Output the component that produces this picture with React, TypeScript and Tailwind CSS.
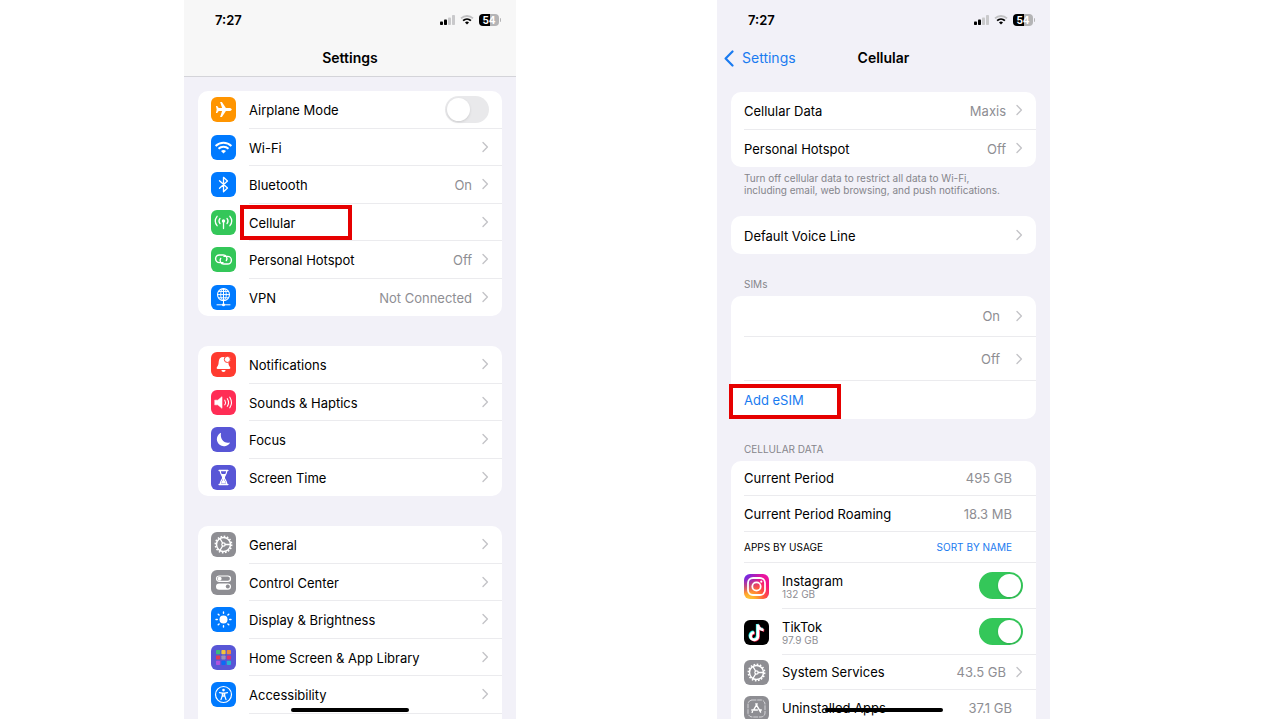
import { useId, useState } from "react";
import type { ReactNode } from "react";

function SignalIcon() {
  return (
    <svg viewBox="0 0 15 10" className="w-[15px] h-2.5" aria-hidden="true">
      <rect x="0" y="6.5" width="3" height="3.5" rx="0.8" fill="#000" />
      <rect x="4" y="4.5" width="3" height="5.5" rx="0.8" fill="#000" />
      <rect x="8" y="2.5" width="3" height="7.5" rx="0.8" fill="#c9c9cb" />
      <rect x="12" y="0" width="3" height="10" rx="0.8" fill="#c9c9cb" />
    </svg>
  );
}

function StatusWifiIcon() {
  return (
    <svg viewBox="0 0 14 10" className="w-3.5 h-2.5" fill="none" aria-hidden="true">
      <path d="M1 3.4C4.4.2 9.6.2 13 3.4" stroke="#c0c0c2" strokeWidth="1.8" />
      <path d="M3.1 5.6c2.2-2 5.6-2 7.8 0" stroke="#000" strokeWidth="1.8" />
      <path d="M5 7.4a3 3 0 0 1 4 0L7 9.6z" fill="#000" />
    </svg>
  );
}

function StatusBar() {
  return (
    <div className="flex items-center justify-between h-10 pl-[31px] pr-[15px]">
      <span className="text-[13px] font-semibold">7:27</span>
      <div className="flex items-center gap-[5px]">
        <SignalIcon />
        <StatusWifiIcon />
        <div className="flex items-center gap-px">
          <span className="w-5 h-3 rounded bg-linear-to-r from-black from-54% to-[#b4b4b6] to-54% text-white text-[10px] leading-3 font-bold text-center">
            54
          </span>
          <span className="w-px h-1 rounded-r bg-[#b4b4b6]" />
        </div>
      </div>
    </div>
  );
}

function Chevron() {
  return (
    <svg viewBox="0 0 7 12" className="w-[7px] h-3 shrink-0" fill="none" aria-hidden="true">
      <path d="M1 1.6 5.4 6 1 10.4" stroke="#c4c4c8" strokeWidth="1.4" strokeLinecap="round" strokeLinejoin="round" />
    </svg>
  );
}

function Tile({ className, children }: { className: string; children: ReactNode }) {
  return (
    <span className={`block size-[25px] shrink-0 rounded-md overflow-hidden ${className}`}>
      <svg viewBox="0 0 25 25" className="size-full" fill="none" stroke="#fff" strokeLinecap="round" strokeLinejoin="round" aria-hidden="true">
        {children}
      </svg>
    </span>
  );
}

function GearTile() {
  return (
    <Tile className="bg-[#8e8e93]">
      <circle cx="12.5" cy="12.5" r="7" strokeWidth="1.5" />
      <circle cx="12.5" cy="12.5" r="8.2" strokeWidth="1.5" strokeLinecap="butt" strokeDasharray="1.6 1.62" />
      <circle cx="12.5" cy="12.5" r="1.7" strokeWidth="1.2" />
      <path d="M14.2 12.5h5M11.6 11 9 6.6M11.6 14 9 18.4" strokeWidth="1.3" />
    </Tile>
  );
}

const icons = {
  airplane: (
    <Tile className="bg-[#ff9500]">
      <path
        d="M20.8 12.5c0-.9-1.3-1.5-2.600-1.500h-3.300L10.900 5H9.100l2 6H7.700L6.200 9H4.900l.8 3.500-.8 3.500h1.300l1.500-2h3.400l-2 6h1.800l4-6h3.300c1.300 0 2.600-.600 2.600-1.500z"
        fill="#fff"
        stroke="none"
      />
    </Tile>
  ),
  wifi: (
    <Tile className="bg-[#007aff]">
      <path d="M4.600 11c4.400-4.300 11.400-4.300 15.800 0M7.500 13.700c2.800-2.700 7.200-2.700 10 0" strokeWidth="2" strokeLinecap="butt" />
      <path d="M10 16c1.400-1.300 3.600-1.300 5 0l-2.500 2.600z" fill="#fff" stroke="none" />
    </Tile>
  ),
  bluetooth: (
    <Tile className="bg-[#007aff]">
      <path d="m8.500 8.800 8 7.200-4 3.700V5.300l4 3.700-8 7.200" strokeWidth="1.300" />
    </Tile>
  ),
  cellular: (
    <Tile className="bg-[#34c759]">
      <circle cx="12.5" cy="11" r="1.700" fill="#fff" stroke="none" />
      <path d="M12.5 11v7.600M9 8.400a4.200 4.200 0 0 0 0 5.200M16 8.400a4.200 4.200 0 0 1 0 5.200M6.100 6.300a7.600 7.600 0 0 0 0 9.400M18.900 6.300a7.600 7.600 0 0 1 0 9.400" strokeWidth="1.300" />
    </Tile>
  ),
  hotspot: (
    <Tile className="bg-[#34c759]">
      <path d="M12 15.600H8.400a3.800 3.800 0 0 1 0-7.600h3.900c3 0 4.600 3 3 5.600M13 9.400h3.600a3.800 3.800 0 0 1 0 7.600h-3.900c-3 0-4.600-3-3-5.600" strokeWidth="1.400" />
    </Tile>
  ),
  vpn: (
    <Tile className="bg-[#007aff]">
      <circle cx="12.5" cy="9.6" r="6" strokeWidth="1.100" />
      <ellipse cx="12.5" cy="9.6" rx="2.8" ry="6" strokeWidth="0.9" />
      <path d="M12.5 3.6v15M6.5 9.6h12M7.6 6.4h9.8M7.6 12.8h9.8M6 19.8h13" strokeWidth="1" />
      <circle cx="12.5" cy="19.8" r="1.5" fill="#fff" stroke="none" />
    </Tile>
  ),
  bell: (
    <Tile className="bg-[#ff3b30]">
      <path
        d="M12.200 5c-2.900 0-4.300 2-4.500 4.800-.2 3-.6 3.900-1.700 5.200-.7.900-.4 1.900.7 1.900h11.600c1.100 0 1.400-1 .7-1.900-1.100-1.300-1.500-2.200-1.700-5.200C17.100 7 15 5 12.200 5zM10.400 18h4.200a2.100 2.100 0 0 1-4.200 0z"
        fill="#fff"
        stroke="none"
      />
      <circle cx="16.400" cy="7.400" r="3.100" fill="#fff" stroke="#ff3b30" strokeWidth="1" />
    </Tile>
  ),
  sound: (
    <Tile className="bg-[#ff2d55]">
      <path d="M4 10.200h2.800l4.200-3.500v11.600l-4.200-3.500H4z" fill="#fff" strokeWidth="0.600" />
      <path d="M13.800 10.200a4.400 4.400 0 0 1 0 4.600M16.300 8.700a7 7 0 0 1 0 7.600M18.800 7.200a10 10 0 0 1 0 10.600" strokeWidth="1.100" />
    </Tile>
  ),
  moon: (
    <Tile className="bg-[#5856d6]">
      <path d="M10.100 5.800a7 7 0 1 0 9 9.600c-5.500 2-10.600-3.200-9-9.600z" fill="#fff" stroke="none" />
    </Tile>
  ),
  hourglass: (
    <Tile className="bg-[#5856d6]">
      <path d="M8.200 5.500h8.600M8.200 19.500h8.600" strokeWidth="1.600" />
      <path d="M9.200 5.500c0 4 2.500 4.800 2.500 7s-2.500 3-2.500 7M15.800 5.500c0 4-2.500 4.800-2.500 7s2.500 3 2.500 7" strokeWidth="1.200" />
      <path d="M10 9h5l-2 3v2.500l2.200 4H9.800l2.200-4V12z" fill="#fff" stroke="none" />
    </Tile>
  ),
  gear: <GearTile />,
  controls: (
    <Tile className="bg-[#8e8e93]">
      <rect x="5.500" y="6" width="14" height="5.400" rx="2.700" strokeWidth="1.200" />
      <circle cx="8.600" cy="8.700" r="2" fill="#fff" stroke="none" />
      <rect x="5" y="13.400" width="15" height="6.400" rx="3.200" fill="#fff" stroke="none" />
      <circle cx="16.800" cy="16.600" r="2" fill="#8e8e93" stroke="none" />
    </Tile>
  ),
  brightness: (
    <Tile className="bg-[#007aff]">
      <circle cx="12.500" cy="12.500" r="4" fill="#fff" stroke="none" />
      <path d="M12.500 5v1.300M12.500 18.700V20M5 12.500h1.300M18.700 12.500H20M7.200 7.200l.9.900M16.900 16.900l.9.900M17.800 7.200l-.9.900M8.100 16.900l-.9.900" strokeWidth="1.400" />
    </Tile>
  ),
  homeScreen: (
    <Tile className="bg-[#5856d6]">
      <g stroke="none">
        <rect x="5" y="5" width="4.200" height="4.200" rx="0.800" fill="#3dbb7c" />
        <rect x="10.400" y="5" width="4.200" height="4.200" rx="0.800" fill="#f5c33b" />
        <rect x="15.800" y="5" width="4.200" height="4.200" rx="0.800" fill="#ee8a3c" />
        <rect x="5" y="10.400" width="4.200" height="4.200" rx="0.800" fill="#e23a55" />
        <rect x="10.400" y="10.400" width="4.200" height="4.200" rx="0.800" fill="#9a93b8" />
        <rect x="15.800" y="10.400" width="4.200" height="4.200" rx="0.800" fill="#e0306e" />
        <rect x="5" y="15.800" width="4.200" height="4.200" rx="0.800" fill="#af52de" />
        <rect x="10.400" y="15.800" width="4.200" height="4.200" rx="0.800" fill="#0a6cf5" />
        <rect x="15.800" y="15.800" width="4.200" height="4.200" rx="0.800" fill="#25b5d0" />
      </g>
    </Tile>
  ),
  accessibility: (
    <Tile className="bg-[#007aff]">
      <circle cx="12.500" cy="12.500" r="8" strokeWidth="1.200" />
      <circle cx="12.500" cy="8.100" r="1.300" fill="#fff" stroke="none" />
      <path d="M8.500 10.600l2.800.6v2.600L10 17.600M16.500 10.600l-2.800.6v2.600l1.300 3.800M11.700 11.200h1.600v3h-1.600z" strokeWidth="1.200" />
    </Tile>
  ),
  instagram: (
    <Tile className="bg-[radial-gradient(circle_at_0%_0%,#5b2df5_0%,#5b2df500_55%),radial-gradient(circle_at_20%_110%,#ffd23e_0%,#ffb02e_20%,#ff543e_48%,#f5137f_72%,#e315b8_100%)]">
      <rect x="4" y="4" width="17" height="17" rx="5" strokeWidth="1.800" />
      <circle cx="12.500" cy="12.500" r="4.200" strokeWidth="1.800" />
      <circle cx="17.300" cy="7.700" r="1.100" fill="#fff" stroke="none" />
    </Tile>
  ),
  tiktok: (
    <Tile className="bg-black">
      <g strokeWidth="2.700" strokeLinecap="butt">
        <path d="M13.200 4v11.600a3.700 3.700 0 1 1-3.700-3.700M13.200 4c.3 3 2.300 5 5.600 5.200" stroke="#25f4ee" />
        <path d="M14.600 5.200v11.600a3.700 3.700 0 1 1-3.700-3.700M14.600 5.200c.3 3 2.300 5 5.600 5.200" stroke="#fe2c55" />
        <path d="M13.900 4.600v11.600a3.700 3.700 0 1 1-3.700-3.700M13.900 4.600c.3 3 2.300 5 5.600 5.200" />
      </g>
    </Tile>
  ),
  uninstalled: (
    <Tile className="bg-[#8e8e93]">
      <rect x="4" y="4" width="17" height="17" rx="4" stroke="#d4d4d8" strokeWidth="1" strokeDasharray="4 1.600" />
      <path d="M11.900 7.800l4.700 8.300M13.100 7.800 9.600 14M7.800 14h5.600M8.500 15.600l-.4.700M15.600 14h1.700" strokeWidth="1.400" />
    </Tile>
  ),
};

interface RowProps {
  label?: string;
  icon?: ReactNode;
  value?: string;
  valueClass?: string;
  chevron?: boolean;
  last?: boolean;
  height?: string;
  link?: boolean;
  children?: ReactNode;
}

function Row({
  label,
  icon,
  value,
  valueClass = "",
  chevron = true,
  last = false,
  height = "flex-1",
  link = false,
  children,
}: RowProps) {
  const textPad = height === "flex-1" ? "pt-0.5" : "";

  return (
    <button type="button" className={`relative flex items-center gap-[13px] w-full pl-[13px] text-left ${height}`}>
      {icon}
      <span
        className={`flex flex-1 items-center gap-2.5 self-stretch border-b pr-[13px] ${last ? "border-transparent" : "border-[#ebebee]"}`}
      >
        <span className={`flex-1 ${textPad} ${link ? "text-[#1a7bf0]" : ""}`}>{label}</span>
        {value && <span className={`text-[#8e8e93] ${textPad} ${valueClass}`}>{value}</span>}
        {chevron && <Chevron />}
      </span>
      {children}
    </button>
  );
}

interface ToggleRowProps {
  label: string;
  icon: ReactNode;
  detail?: string;
  initial: boolean;
  height?: string;
}

function ToggleRow({ label, icon, detail, initial, height = "flex-1" }: ToggleRowProps) {
  const id = useId();
  const [on, setOn] = useState(initial);

  return (
    <div className={`flex items-center gap-[13px] pl-[13px] ${height}`}>
      {icon}
      <div className="flex flex-1 items-center self-stretch border-b border-[#ebebee] pr-[13px]">
        <label htmlFor={id} className="flex-1 pt-0.5">
          {label}
          {detail && <span className="block text-[10px] leading-[11px] text-[#8e8e93]">{detail}</span>}
        </label>
        <input
          id={id}
          type="checkbox"
          role="switch"
          checked={on}
          onChange={(e) => setOn(e.target.checked)}
          className="appearance-none w-11 h-[27px] shrink-0 rounded-full bg-[#e9e9eb] p-0.5 transition-colors checked:bg-[#34c759] before:block before:size-[23px] before:rounded-full before:bg-white before:shadow-sm before:transition-transform checked:before:translate-x-[17px]"
        />
      </div>
    </div>
  );
}

function Group({ className = "rounded-[10px]", children }: { className?: string; children: ReactNode }) {
  return <section className={`flex flex-col mx-3.5 bg-white ${className}`}>{children}</section>;
}

function Phone({ className, children }: { className: string; children: ReactNode }) {
  return (
    <div className={`relative h-full overflow-hidden bg-[#f2f1f8] ${className}`}>
      {children}
      {/* Home indicator */}
      <div className="absolute bottom-[7px] left-1/2 -translate-x-1/2 w-[118px] h-1 rounded-full bg-black" />
    </div>
  );
}

function SettingsScreen() {
  return (
    <Phone className="col-start-2">
      <header className="h-[77px] border-b border-[#d4d4d9] bg-[#f7f7f7]">
        <StatusBar />
        <h1 className="text-center text-sm leading-9 font-semibold">Settings</h1>
      </header>

      <Group className="mt-3.5 h-[225px] rounded-[10px]">
        <ToggleRow label="Airplane Mode" icon={icons.airplane} initial={false} />
        <Row label="Wi-Fi" icon={icons.wifi} />
        <Row label="Bluetooth" icon={icons.bluetooth} value="On" />
        <Row label="Cellular" icon={icons.cellular}>
          <span className="absolute top-px left-[42px] w-28 h-[35px] border-4 border-[#e60000]" />
        </Row>
        <Row label="Personal Hotspot" icon={icons.hotspot} value="Off" />
        <Row label="VPN" icon={icons.vpn} value="Not Connected" last />
      </Group>

      <Group className="mt-[30px] h-[150px] rounded-[10px]">
        <Row label="Notifications" icon={icons.bell} />
        <Row label="Sounds & Haptics" icon={icons.sound} />
        <Row label="Focus" icon={icons.moon} />
        <Row label="Screen Time" icon={icons.hourglass} last />
      </Group>

      {/* Runs on below the fold */}
      <Group className="mt-[30px] h-[225px] rounded-[10px]">
        <Row label="General" icon={icons.gear} />
        <Row label="Control Center" icon={icons.controls} />
        <Row label="Display & Brightness" icon={icons.brightness} />
        <Row label="Home Screen & App Library" icon={icons.homeScreen} />
        <Row label="Accessibility" icon={icons.accessibility} />
        <div className="flex-1" />
      </Group>
    </Phone>
  );
}

function CellularScreen() {
  return (
    <Phone className="col-start-4">
      <StatusBar />
      <header className="relative flex items-center justify-center h-9">
        <a href="#settings" className="absolute left-[7px] flex items-center gap-2 text-sm text-[#1a7bf0]">
          <svg viewBox="0 0 10 17" className="w-2.5 h-[17px]" fill="none" aria-hidden="true">
            <path d="M8.500 1.500 1.600 8.500l6.900 7" stroke="currentColor" strokeWidth="2.200" strokeLinecap="round" strokeLinejoin="round" />
          </svg>
          Settings
        </a>
        <h1 className="text-sm font-semibold">Cellular</h1>
      </header>

      <Group className="mt-4 h-[75px] rounded-[10px]">
        <Row label="Cellular Data" value="Maxis" />
        <Row label="Personal Hotspot" value="Off" last />
      </Group>
      <p className="mx-[27px] mt-[5px] text-[10px] leading-3 text-[#85858b]">
        Turn off cellular data to restrict all data to Wi-Fi,
        <br />
        including email, web browsing, and push notifications.
      </p>

      <Group className="mt-5 h-[38px] rounded-[10px]">
        <Row label="Default Voice Line" last />
      </Group>

      <h2 className="mx-[27px] mt-6 text-[10px] leading-3 text-[#85858b]">SIMs</h2>
      <Group className="mt-1.5 rounded-[10px]">
        <Row value="On" valueClass="pr-1.5" height="h-[41px]" />
        <Row value="Off" valueClass="pr-1.5" height="h-11" />
        <Row label="Add eSIM" height="h-[38px]" chevron={false} link last>
          <span className="absolute top-[3px] -left-0.5 w-28 h-[35px] border-4 border-[#e60000]" />
        </Row>
      </Group>

      <h2 className="mx-[27px] mt-6 text-[10px] leading-3 text-[#85858b]">CELLULAR DATA</h2>
      <Group className="mt-1.5 rounded-t-[10px]">
        <Row label="Current Period" value="495 GB" valueClass="pr-[11px]" height="h-[35px]" chevron={false} />
        <Row label="Current Period Roaming" value="18.3 MB" valueClass="pr-[11px]" height="h-9" chevron={false} />
        <div className="flex items-center justify-between h-[31px] ml-[13px] pr-6 border-b border-[#ebebee] text-[10px]">
          <h3>APPS BY USAGE</h3>
          <button type="button" className="text-[#1a7bf0]">
            SORT BY NAME
          </button>
        </div>
        <ToggleRow label="Instagram" icon={icons.instagram} detail="132 GB" initial height="h-[46px]" />
        <ToggleRow label="TikTok" icon={icons.tiktok} detail="97.9 GB" initial height="h-[46px]" />
        <Row label="System Services" icon={icons.gear} value="43.5 GB" height="h-[35px]" />
        <Row label="Uninstalled Apps" icon={icons.uninstalled} value="37.1 GB" valueClass="pr-[11px]" height="h-9" chevron={false} last />
      </Group>
    </Phone>
  );
}

export default function App() {
  return (
    <main className="grid grid-cols-[184fr_332fr_201fr_333fr_230fr] h-screen pb-px bg-white font-['Inter','Liberation_Sans',sans-serif] text-[13px] leading-4 text-black">
      <SettingsScreen />
      <CellularScreen />
    </main>
  );
}
